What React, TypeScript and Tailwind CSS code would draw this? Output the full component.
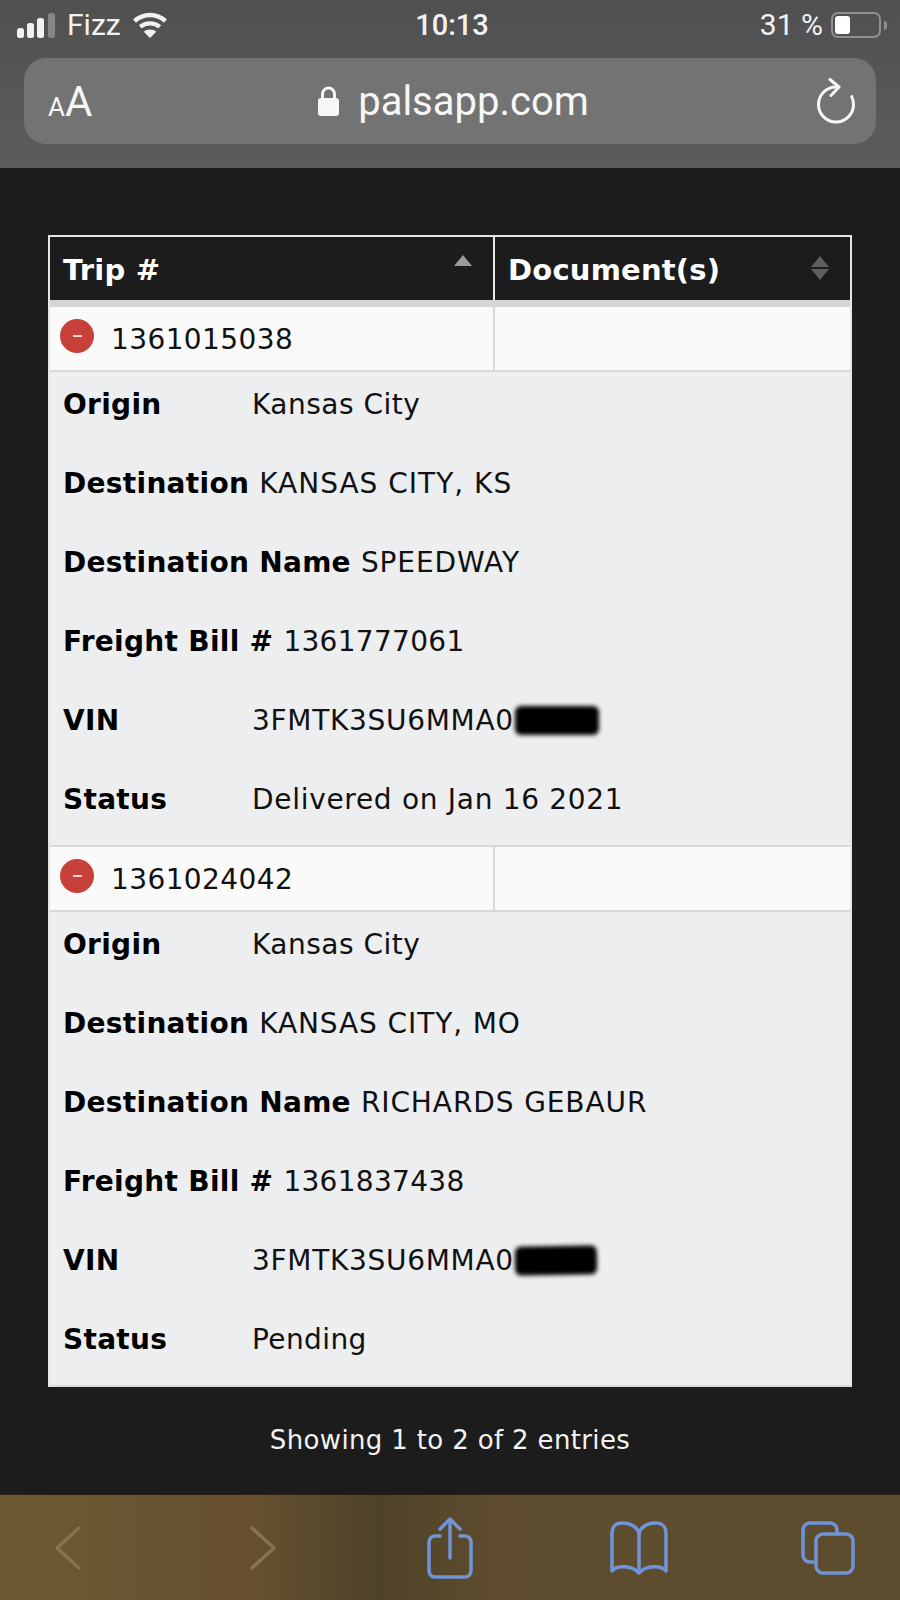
const sans = "font-['DejaVu_Sans',sans-serif]";

interface Detail {
    label: string;
    value: string;
    spacing?: string;
    redacted?: string;
}

interface Trip {
    id: string;
    details: Detail[];
}

const trips: Trip[] = [
    {
        id: "1361015038",
        details: [
            { label: "Origin", value: "Kansas City", spacing: "tracking-[0.5px]" },
            { label: "Destination", value: "KANSAS CITY, KS", spacing: "tracking-[1px]" },
            { label: "Destination Name", value: "SPEEDWAY", spacing: "tracking-[0.9px]" },
            { label: "Freight Bill #", value: "1361777061", spacing: "tracking-[0.3px]" },
            { label: "VIN", value: "3FMTK3SU6MMA0", redacted: "w-[84px]" },
            { label: "Status", value: "Delivered on Jan 16 2021" },
        ],
    },
    {
        id: "1361024042",
        details: [
            { label: "Origin", value: "Kansas City", spacing: "tracking-[0.5px]" },
            { label: "Destination", value: "KANSAS CITY, MO", spacing: "tracking-[0.9px]" },
            { label: "Destination Name", value: "RICHARDS GEBAUR", spacing: "tracking-[0.9px]" },
            { label: "Freight Bill #", value: "1361837438", spacing: "tracking-[0.3px]" },
            { label: "VIN", value: "3FMTK3SU6MMA0", redacted: "w-[82px] -rotate-1" },
            { label: "Status", value: "Pending", spacing: "tracking-[0.4px]" },
        ],
    },
];

function StatusBar() {
    return (
        <div className="flex items-center justify-between h-[50px] pl-[17px] pr-[13px] text-[#f2f2f2] font-['Roboto',sans-serif]">
            <div className="flex items-center w-[300px]">
                <svg width="39" height="25" viewBox="0 0 39 25" fill="#f2f2f2">
                    <rect x="0" y="15" width="7" height="10" rx="2.500" />
                    <rect x="10" y="10" width="7" height="15" rx="2.500" />
                    <rect x="20" y="5" width="7" height="20" rx="2.500" />
                    <rect x="31" y="0" width="7" height="25" rx="2.500" fill="#858585" />
                </svg>
                <span className="ml-[11px] text-[30px] leading-none">Fizz</span>
                <svg className="ml-[11px]" width="36" height="27" viewBox="0 0 36 28" fill="none" stroke="#f2f2f2" strokeWidth="4.500">
                    <path d="M2 9.500C11 1 25 1 34 9.500" />
                    <path d="M8 15.500C13.500 10.500 22.500 10.500 28 15.500" />
                    <path d="M18 27L11.500 20.500C15 17.500 21 17.500 24.500 20.500Z" fill="#f2f2f2" stroke="none" />
                </svg>
            </div>
            <span className="text-[29px] font-medium leading-none">10:13</span>
            <div className="flex items-center justify-end w-[300px]">
                <span className="text-[30px] leading-none">31 %</span>
                <div className="ml-[8px] flex items-center">
                    <div className="w-[50px] h-[26px] rounded-[7px] border-2 border-[#8f8f8f] p-[2px]">
                        <div className="w-[15px] h-full rounded-[3px] bg-white" />
                    </div>
                    <div className="ml-[3px] w-[3px] h-[9px] rounded-r bg-[#8f8f8f]" />
                </div>
            </div>
        </div>
    );
}

function UrlBar() {
    return (
        <div className="mx-6 h-[86px] rounded-[22px] bg-[#737373] flex items-center justify-between pl-[24px] pr-[20px] text-[#f7f7f7] font-['Roboto',sans-serif]">
            <div className="flex items-baseline w-[80px] leading-none mt-[2px]">
                <span className="text-[26px]">A</span>
                <span className="text-[42px]">A</span>
            </div>
            <div className="flex items-center gap-[18px] ml-[2px]">
                <svg width="23" height="32" viewBox="0 0 22 32">
                    <path d="M5 14V9a6 6 0 0 1 12 0v5" fill="none" stroke="#f7f7f7" strokeWidth="3" />
                    <rect x="0.500" y="13" width="21" height="18" rx="3" fill="#f7f7f7" />
                </svg>
                <span className="text-[40px] leading-none mt-[2px]">palsapp.com</span>
            </div>
            <div className="w-[80px] flex justify-end">
                <svg width="40" height="46" viewBox="0 0 40 46" fill="none" stroke="#f7f7f7" strokeWidth="3" strokeLinecap="round" strokeLinejoin="round">
                    <path d="M20 9C10 9 2.500 17 2.500 26.500a17.500 17.500 0 1 0 35 0c0-3-0.700-5.500-1.800-8" />
                    <path d="M14 1.500L23 9L15 17.500" />
                </svg>
            </div>
        </div>
    );
}

function SortIcon({ active }: { active?: boolean }) {
    return (
        <svg width="20" height="26" viewBox="0 0 20 26">
            <path d="M10 1L19 12H1Z" fill={active ? "#9a9a9a" : "#5e5e5e"} />
            {!active && <path d="M10 25L1 14H19Z" fill="#5e5e5e" />}
        </svg>
    );
}

function TripRow({ trip }: { trip: Trip }) {
    return (
        <>
            <div className="flex h-[65px] bg-[#fafafa] border-b-2 border-[#d9d9d9] text-[#111]">
                <div className="w-[445px] flex items-center pl-[10px] border-r-2 border-[#d9d9d9]">
                    <div className="w-[34px] h-[34px] rounded-full bg-[#c8403a] flex items-center justify-center mb-[6px]">
                        <div className="w-[9px] h-[2px] bg-[#f3d6d4]" />
                    </div>
                    <span className="ml-[17px] mt-[3px] tracking-[0.4px]">{trip.id}</span>
                </div>
                <div className="flex-1" />
            </div>
            <div className="h-[475px] bg-[#edeef0] border-b-2 border-[#d9d9d9] pl-[13px] text-[#111] tracking-[0.7px]">
                {trip.details.map((d) => (
                    <div key={d.label} className="flex items-center h-[79px] pb-[14px]">
                        <span className="font-bold text-black tracking-[0.3px] min-w-[179px] mr-[10px]">{d.label}</span>
                        <span className={d.spacing}>{d.value}</span>
                        {d.redacted && <div className={`${d.redacted} h-[29px] ml-[1px] rounded-[6px] bg-black blur-[2px]`} />}
                    </div>
                ))}
            </div>
        </>
    );
}

export default function App() {
    return (
        <div className={`w-[900px] h-[1600px] flex flex-col bg-[#1c1c1c] overflow-hidden ${sans}`}>
            <div className="h-[168px] bg-gradient-to-b from-[#505050] to-[#5c5c5c] shrink-0">
                <StatusBar />
                <div className="mt-[8px]">
                    <UrlBar />
                </div>
            </div>

            <div className="flex-1 px-[48px] pt-[67px] text-[28px] leading-none">
                <div className="border-2 border-b-0 border-[#e6e6e6]">
                    <div className="flex h-[63px] bg-[#1c1c1c] text-white font-bold text-[29px] tracking-[0.2px]">
                        <div className="w-[445px] flex justify-between pl-[13px] pr-[20px] border-r-2 border-[#e6e6e6]">
                            <span className="self-center mt-[3px]">Trip #</span>
                            <div className="pt-[17px]"><SortIcon active /></div>
                        </div>
                        <div className="flex-1 flex justify-between pl-[13px] pr-[20px]">
                            <span className="self-center mt-[3px]">Document(s)</span>
                            <div className="pt-[18px]"><SortIcon /></div>
                        </div>
                    </div>
                    <div className="h-[7px] bg-[#d6d6d6]" />
                    {trips.map((t) => (
                        <TripRow key={t.id} trip={t} />
                    ))}
                </div>
                <p className="mt-[40px] text-center text-[#f2f2f2] text-[26px] tracking-[0.35px]">Showing 1 to 2 of 2 entries</p>
            </div>

            <div className="h-[106px] shrink-0 flex items-center pl-[54px] border-t border-[#2a2110] bg-[linear-gradient(90deg,#6d5a32_0%,#665030_28%,#4e4228_42%,#5f4c2e_55%,#5d4d2e_100%)]">
                <svg width="28" height="46" viewBox="0 0 28 46" fill="none" stroke="#84744f" strokeWidth="3.500" strokeLinecap="round" strokeLinejoin="round">
                    <path d="M25 3L3 23L25 43" />
                </svg>
                <svg className="ml-[167px]" width="28" height="46" viewBox="0 0 28 46" fill="none" stroke="#84744f" strokeWidth="3.500" strokeLinecap="round" strokeLinejoin="round">
                    <path d="M3 3L25 23L3 43" />
                </svg>
                <svg className="ml-[150px]" width="46" height="62" viewBox="0 0 46 62" fill="none" stroke="#6f95d8" strokeWidth="3.500" strokeLinecap="round" strokeLinejoin="round">
                    <path d="M13 19H8a6 6 0 0 0-6 6v29a6 6 0 0 0 6 6h30a6 6 0 0 0 6-6V25a6 6 0 0 0-6-6h-5" />
                    <path d="M23 41V3" />
                    <path d="M13 12L23 2L33 12" />
                </svg>
                <svg className="ml-[137px]" width="58" height="54" viewBox="0 0 58 54" fill="none" stroke="#6f95d8" strokeWidth="3.500" strokeLinejoin="round">
                    <path d="M29 12C26 4 19 2 12 2C6 2 2 6 2 12V50C6 44 22 44 29 52C36 44 52 44 56 50V12C56 6 52 2 46 2C39 2 32 4 29 12Z" />
                    <path d="M29 12V52" />
                </svg>
                <svg className="ml-[133px]" width="54" height="54" viewBox="0 0 54 54" fill="none" stroke="#6f95d8" strokeWidth="3.500">
                    <path d="M13 41H9a7 7 0 0 1-7-7V9a7 7 0 0 1 7-7h20a7 7 0 0 1 7 7v4" />
                    <rect x="15" y="13" width="37" height="39" rx="7" />
                </svg>
            </div>
        </div>
    );
}
